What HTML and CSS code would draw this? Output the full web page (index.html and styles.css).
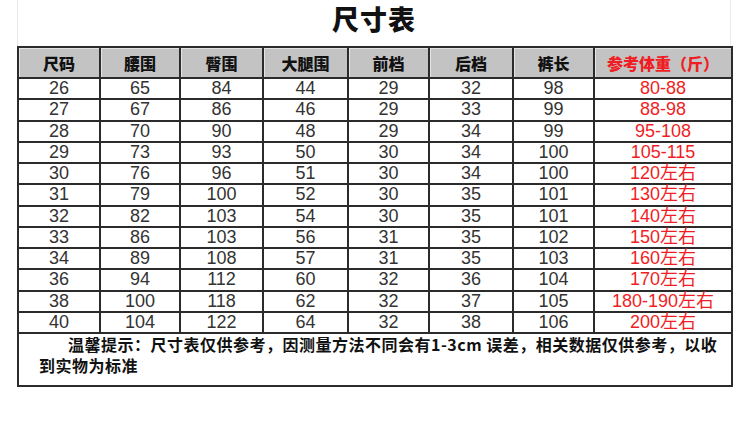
FILE: index.html
```html
<!DOCTYPE html>
<html lang="zh">
<head>
<meta charset="utf-8">
<title>尺寸表</title>
<link rel="stylesheet" href="styles.css">
</head>
<body>
<div class="sheet">
  <div class="title-bar"><h1 class="title">尺寸表</h1></div>
  <table class="size-table">
    <colgroup>
      <col class="c1"><col class="c2"><col class="c3"><col class="c4"><col class="c5"><col class="c6"><col class="c7"><col class="c8">
    </colgroup>
    <thead>
      <tr>
        <th>尺码</th><th>腰围</th><th>臀围</th><th>大腿围</th><th>前档</th><th>后档</th><th>裤长</th><th class="red">参考体重（斤）</th>
      </tr>
    </thead>
    <tbody>
      <tr><td>26</td><td>65</td><td>84</td><td>44</td><td>29</td><td>32</td><td>98</td><td class="red">80-88</td></tr>
      <tr><td>27</td><td>67</td><td>86</td><td>46</td><td>29</td><td>33</td><td>99</td><td class="red">88-98</td></tr>
      <tr><td>28</td><td>70</td><td>90</td><td>48</td><td>29</td><td>34</td><td>99</td><td class="red">95-108</td></tr>
      <tr><td>29</td><td>73</td><td>93</td><td>50</td><td>30</td><td>34</td><td>100</td><td class="red">105-115</td></tr>
      <tr><td>30</td><td>76</td><td>96</td><td>51</td><td>30</td><td>34</td><td>100</td><td class="red">120左右</td></tr>
      <tr><td>31</td><td>79</td><td>100</td><td>52</td><td>30</td><td>35</td><td>101</td><td class="red">130左右</td></tr>
      <tr><td>32</td><td>82</td><td>103</td><td>54</td><td>30</td><td>35</td><td>101</td><td class="red">140左右</td></tr>
      <tr><td>33</td><td>86</td><td>103</td><td>56</td><td>31</td><td>35</td><td>102</td><td class="red">150左右</td></tr>
      <tr><td>34</td><td>89</td><td>108</td><td>57</td><td>31</td><td>35</td><td>103</td><td class="red">160左右</td></tr>
      <tr><td>36</td><td>94</td><td>112</td><td>60</td><td>32</td><td>36</td><td>104</td><td class="red">170左右</td></tr>
      <tr><td>38</td><td>100</td><td>118</td><td>62</td><td>32</td><td>37</td><td>105</td><td class="red">180-190左右</td></tr>
      <tr><td>40</td><td>104</td><td>122</td><td>64</td><td>32</td><td>38</td><td>106</td><td class="red">200左右</td></tr>
      <tr><td colspan="8" class="note">温馨提示：尺寸表仅供参考，因测量方法不同会有1-3cm 误差，相关数据仅供参考，以收<br>到实物为标准</td></tr>
    </tbody>
  </table>
</div>
</body>
</html>
```

FILE: styles.css
```css
html, body {
  margin: 0;
  padding: 0;
  background: #ffffff;
}

.sheet {
  width: 714px;
  margin-left: 17px;
}

.title-bar {
  height: 46px;
  border-left: 1px solid #e6e6e6;
  border-right: 1px solid #ececec;
  box-sizing: border-box;
}

.title {
  margin: 0;
  line-height: 37px;
  text-align: center;
  font-family: "Noto Sans CJK SC", sans-serif;
  font-weight: 900;
  font-size: 27px;
  color: #111;
  letter-spacing: 1px;
}

.size-table {
  width: 714px;
  border-collapse: collapse;
  table-layout: fixed;
  font-family: "Liberation Sans", Arial, "Noto Sans CJK SC", sans-serif;
}

.c1 { width: 82px; }
.c2 { width: 80px; }
.c3 { width: 83px; }
.c4 { width: 85px; }
.c5 { width: 81px; }
.c6 { width: 84px; }
.c7 { width: 81px; }
.c8 { width: 138px; }

.size-table th,
.size-table td {
  border: 2px solid #2b2b2b;
  padding: 0;
  text-align: center;
}

.size-table th {
  height: 29px;
  background: #c3c3c3;
  box-shadow: inset 1px 1px 0 #e4e4e4;
  font-family: "Noto Sans CJK SC", sans-serif;
  font-weight: 900;
  font-size: 16px;
  color: #111;
  line-height: 20px;
}

.size-table td {
  height: 19.25px;
  font-size: 18px;
  line-height: 19px;
  color: #333;
}

.size-table .red {
  color: #f01e24;
}

.size-table td.note {
  height: 51px;
  text-align: left;
  vertical-align: top;
  padding: 0 8px 0 20px;
  text-indent: 29px;
  font-family: "Noto Sans CJK SC", sans-serif;
  font-weight: 700;
  font-size: 16px;
  letter-spacing: 0.5px;
  line-height: 20.5px;
  color: #111;
  white-space: nowrap;
}
```
